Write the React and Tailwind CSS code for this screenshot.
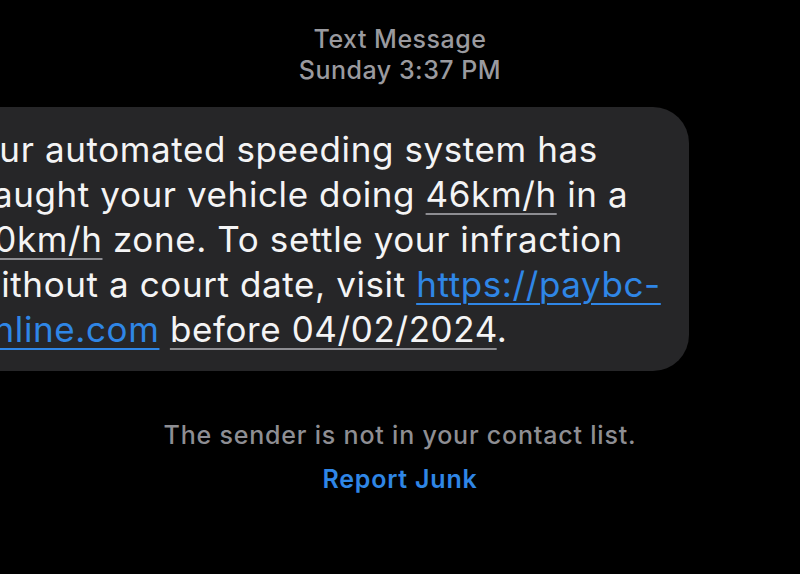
export default function App() {
  const detected =
    "underline decoration-[#8d8d92] decoration-[1.5px] underline-offset-[6px]";
  const link =
    "text-[#2f86e6] underline decoration-[#2f86e6] decoration-[1.5px] underline-offset-[6px]";

  return (
    <div
      className="min-h-screen overflow-hidden bg-black"
      style={{ fontFamily: "Inter, 'Noto Sans', sans-serif" }}
    >
      <header className="pt-[24px] text-center text-[25px] leading-[31px] font-medium tracking-[0.5px] text-[#9a9a9f]">
        <div>Text Message</div>
        <div>Sunday 3:37 PM</div>
      </header>

      <div className="mt-[21px] ml-[-56px] w-max rounded-[36px] bg-[#262628] pt-[20px] pb-[19px] pl-[28px] pr-[28px] text-[35px] leading-[45px] tracking-[0.6px] whitespace-nowrap text-[#f4f4f5]">
        Our automated speeding system has
        <br />
        caught your vehicle doing <span className={detected}>46km/h</span> in a
        <br />
        <span className={detected}>30km/h</span> zone. To settle your infraction
        <br />
        without a court date, visit <span className={link}>https://paybc-</span>
        <br />
        <span className={link}>online.com</span>{" "}
        <span className={detected}>before 04/02/2024</span>.
      </div>

      <p className="mt-[49px] text-center text-[25px] leading-[30px] font-medium tracking-[0.8px] text-[#8e8e93]">
        The sender is not in your contact list.
      </p>
      <p className="mt-[14px] text-center text-[25px] leading-[30px] font-semibold tracking-[0.8px] text-[#2f86e6]">
        Report Junk
      </p>
    </div>
  );
}
